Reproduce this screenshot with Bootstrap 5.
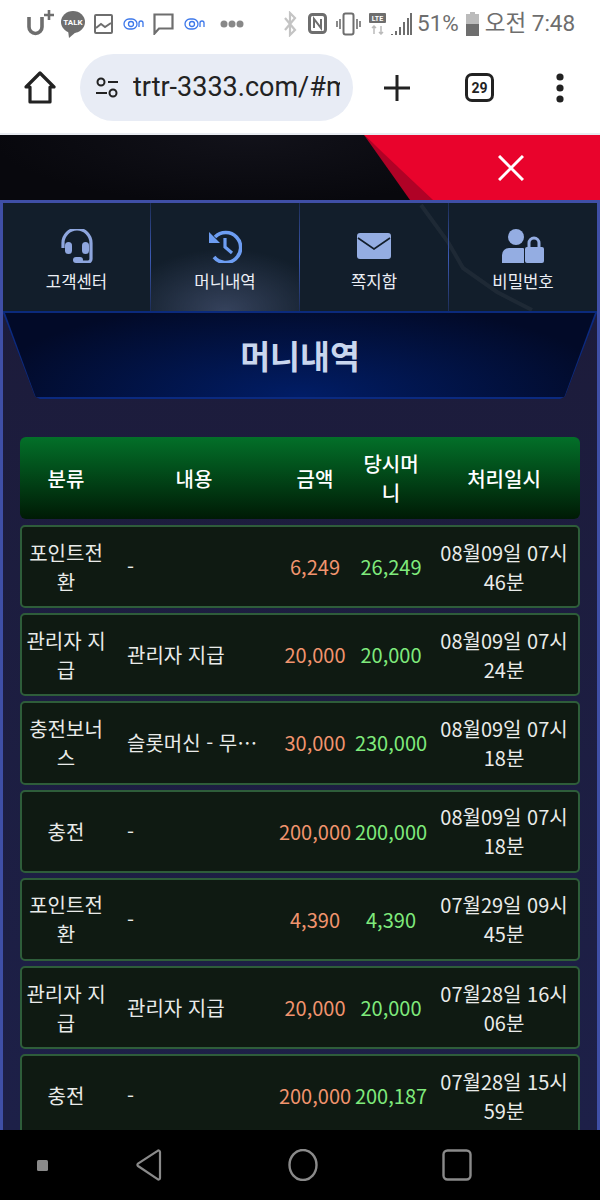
<!DOCTYPE html>
<html lang="ko">
<head>
  <meta charset="UTF-8" />
  <title>머니내역</title>
  <link href="https://cdn.jsdelivr.net/npm/bootstrap@5.3.0/dist/css/bootstrap.min.css" rel="stylesheet">
  <style>
    html, body { margin: 0; background: #000; }
    body { font-family: "Noto Sans CJK KR", "Noto Sans", sans-serif; }
    .phone { width: 600px; height: 1200px; overflow: hidden; }
    /* status bar + browser toolbar */
    .status-bar { height: 42px; background: #fff; color: #6e6e6e; padding: 5px 0 0 27px; }
    .status-bar svg { display: block; flex: none; }
    .status-text { font-family: "Roboto", "Noto Sans CJK KR", sans-serif; font-size: 22.5px; white-space: nowrap; }
    .tool-bar { height: 91px; background: #fff; padding: 0 28px 0 24px; }
    .url-pill { width: 273px; height: 67px; margin-left: 24px; background: #e8ecf5; border-radius: 34px; padding-left: 15px; overflow: hidden; flex: none; }
    .url-text { font-family: "Roboto", sans-serif; font-size: 27px; color: #222; width: 207px; margin-left: 14px; overflow: hidden; white-space: nowrap; }
    .tab-count { width: 29px; height: 29px; border: 3px solid #222; border-radius: 7px; font: 700 14px "Roboto", sans-serif; color: #222; flex: none; }
    .tool-line { height: 2px; background: #e8ebf1; }
    /* page */
    .page-area { height: 995px; overflow: hidden; background: #0a0a10; }
    .banner { height: 65px; position: relative; background: radial-gradient(ellipse 260px 70px at 250px 0, #12121a, #08080d); }
    .banner-dark { position: absolute; inset: 0; background: #b00226; clip-path: polygon(364px 0, 436px 65px, 410px 65px); }
    .banner-red { position: absolute; inset: 0; background: #e9032c; clip-path: polygon(364px 0, 600px 0, 600px 65px, 433px 65px); }
    .banner-close { position: absolute; right: 76px; top: 20px; }
    .panel { height: 930px; border: solid #3f4fa6; border-width: 3px 3px 0; background: linear-gradient(#1c1b39, #1d2048); overflow: hidden; }
    .side-tabs { height: 110px; background: #121e2b; border-bottom: 2px solid #0b2a7c; position: relative; }
    .side-bolt { position: absolute; left: 410px; top: 0; }
    .side-tab { flex: 0 0 149px; color: #eceff5; font-size: 16.700px; padding-top: 26px; line-height: 24px; border-left: 1px solid; border-image: linear-gradient(#1c2c54, #3c5ab4 50%, #1c2c54) 1; position: relative; }
    .side-tab:first-of-type { border-left: 0; flex-basis: 147px; }
    .side-tab.on { background: radial-gradient(ellipse 105px 62px at 50% 100%, #35425c, #121e2b00); }
    .side-tab svg { display: block; height: 34px; margin-bottom: 6px; }
    .title-edge { height: 86px; background: #0b2a80; clip-path: polygon(0 0, 100% 0, 94.600% 97%, 93.800% 100%, 6.200% 100%, 5.400% 97%); padding-bottom: 2px; }
    .title-box { height: 100%; background: radial-gradient(ellipse 60% 130% at 50% 100%, #011d66, #020a28 90%); clip-path: polygon(2px 0, calc(100% - 2px) 0, 94.500% 100%, 5.500% 100%); color: #c9d6ee; font-size: 32.500px; font-weight: 700; }
    .hist-wrap { padding: 38px 17px 0; }
    .hist-head { height: 82px; border-radius: 6px; background: linear-gradient(#037029, #001a05); color: #fff; font-size: 20px; font-weight: 500; line-height: 29px; margin-bottom: 6px; padding: 0 2px; }
    .hist-row { height: 83.200px; border: 2px solid #2e5d3a; border-radius: 5px; background: #0f1a12; color: #e9ebe9; font-size: 20px; line-height: 29px; margin-bottom: 5px; }
    .col-kind { width: 88px; flex: none; padding: 0 3px; text-align: center; }
    .col-memo { width: 168px; flex: none; padding: 0 17px; min-width: 0; }
    .col-memo.head { text-align: center; padding: 0; }
    .memo-text { white-space: nowrap; }
    .col-amt { width: 74px; flex: none; text-align: center; white-space: nowrap; color: #f1946e; }
    .col-now { width: 78px; flex: none; text-align: center; white-space: nowrap; color: #7fea7c; }
    .col-now.head { white-space: normal; padding: 0 4px; color: #fff; }
    .col-amt.head { color: #fff; }
    .col-date { width: 148px; flex: none; padding: 0 5px; text-align: center; }
    .nav-bar { height: 70px; background: #000; padding-left: 37px; }
  </style>
</head>
<body>
<div class="phone d-flex flex-column">
  <div class="status-bar d-flex align-items-center">
    <svg width="58" height="30" viewBox="0 0 58 30"><path d="M2 8v10a6.500 6.500 0 0 0 13 0V8" fill="none" stroke="#6e6e6e" stroke-width="3.600"/><path d="M17 6h10M22 1v10" stroke="#6e6e6e" stroke-width="2.600"/><ellipse cx="46" cy="13" rx="12" ry="11" fill="#6e6e6e"/><path d="M41 21l1 8 7-6z" fill="#6e6e6e"/><text x="46" y="16" text-anchor="middle" font-family="Roboto, sans-serif" font-size="8" font-weight="700" fill="#fff">TALK</text></svg>
    <svg style="margin-left:9px" width="19" height="20" viewBox="0 0 19 20"><rect x="1" y="1" width="17" height="18" rx="1" fill="none" stroke="#6e6e6e" stroke-width="2"/><path d="M2 14l5-4 4 3 6-4" fill="none" stroke="#6e6e6e" stroke-width="2"/></svg>
    <svg style="margin-left:10px" width="21" height="12" viewBox="0 0 21 12"><rect x="1" y="1" width="13" height="10" rx="5" fill="none" stroke="#3d78ea" stroke-width="1.300"/><circle cx="8" cy="6" r="2.500" fill="none" stroke="#3d78ea" stroke-width="1.300"/><path d="M16 9V5a2 2 0 0 1 4 0v4" fill="none" stroke="#3d78ea" stroke-width="1.300"/></svg>
    <svg style="margin-left:9px" width="21" height="22" viewBox="0 0 21 22"><path d="M1.500 1.500h18v14H6l-4.500 5z" fill="none" stroke="#6e6e6e" stroke-width="2.200"/></svg>
    <svg style="margin-left:10px" width="21" height="12" viewBox="0 0 21 12"><rect x="1" y="1" width="13" height="10" rx="5" fill="none" stroke="#3d78ea" stroke-width="1.300"/><circle cx="8" cy="6" r="2.500" fill="none" stroke="#3d78ea" stroke-width="1.300"/><path d="M16 9V5a2 2 0 0 1 4 0v4" fill="none" stroke="#3d78ea" stroke-width="1.300"/></svg>
    <svg style="margin-left:15px" width="24" height="8" viewBox="0 0 24 8"><circle cx="4" cy="4" r="3.500" fill="#888"/><circle cx="12" cy="4" r="3.500" fill="#888"/><circle cx="20" cy="4" r="3.500" fill="#888"/></svg>
    <svg style="margin-left:39px" width="14" height="26" viewBox="0 0 14 26"><path d="M2 7l10 12-5 5V2l5 5L2 19" fill="none" stroke="#c4c4c4" stroke-width="2.200"/></svg>
    <svg style="margin-left:11px" width="19" height="21" viewBox="0 0 19 21"><rect x="1.500" y="1.500" width="16" height="18" rx="3" fill="none" stroke="#6e6e6e" stroke-width="3"/><path d="M6 15V6l7 9V6" fill="none" stroke="#6e6e6e" stroke-width="2"/></svg>
    <svg style="margin-left:9px" width="25" height="24" viewBox="0 0 25 24"><rect x="7.500" y="1.500" width="10" height="21" rx="2" fill="none" stroke="#6e6e6e" stroke-width="2"/><path d="M4 7v10M1 9v6M21 7v10M24 9v6" stroke="#6e6e6e" stroke-width="1.600"/></svg>
    <svg style="margin-left:8px" width="17" height="22" viewBox="0 0 17 22"><rect width="17" height="10" rx="1" fill="#6e6e6e"/><text x="8.500" y="7.500" text-anchor="middle" font-family="Roboto, sans-serif" font-size="7" font-weight="700" fill="#fff">LTE</text><path d="M5 13v8M3 15l2-2 2 2M12 13v8M10 19l2 2 2-2" fill="none" stroke="#bbb" stroke-width="1.500"/></svg>
    <svg style="margin-left:5px" width="21" height="24" viewBox="0 0 21 24"><path d="M1 23v-1M5 23v-4M9 23v-8M13 23V10M17 23V6M20 23V1" stroke="#6e6e6e" stroke-width="2"/></svg>
    <span class="status-text" style="margin-left:5px">51%</span>
    <svg style="margin-left:7px" width="13" height="24" viewBox="0 0 13 24"><rect x="4" width="5" height="3" fill="#bbb"/><rect y="2" width="13" height="22" fill="#bbb"/><rect y="12" width="13" height="12" fill="#6e6e6e"/></svg>
    <span class="status-text" style="margin-left:6px">오전 7:48</span>
  </div>
  <div class="tool-bar d-flex align-items-center">
    <svg width="32" height="34" viewBox="0 0 32 34"><path d="M2 16L16 2l14 14h-4v15H6V16z" fill="none" stroke="#222" stroke-width="3.200" stroke-linejoin="round"/></svg>
    <div class="url-pill d-flex align-items-center">
      <svg width="24" height="24" viewBox="0 0 24 24" style="flex:none"><circle cx="6" cy="6" r="3.500" fill="none" stroke="#222" stroke-width="2"/><path d="M13 6h10M1 17h11" stroke="#222" stroke-width="2"/><circle cx="18" cy="17" r="3.500" fill="none" stroke="#222" stroke-width="2"/></svg>
      <span class="url-text">trtr-3333.com/#m</span>
    </div>
    <svg style="margin-left:30px;flex:none" width="28" height="28" viewBox="0 0 28 28"><path d="M14 1v26M1 14h26" stroke="#222" stroke-width="3"/></svg>
    <div class="tab-count d-flex align-items-center justify-content-center" style="margin-left:54px">29</div>
    <svg style="margin-left:62px;flex:none" width="8" height="30" viewBox="0 0 8 30"><circle cx="4" cy="4" r="3.600" fill="#222"/><circle cx="4" cy="15" r="3.600" fill="#222"/><circle cx="4" cy="26" r="3.600" fill="#222"/></svg>
  </div>
  <div class="tool-line"></div>
  <div class="page-area">
    <div class="banner">
      <div class="banner-dark"></div>
      <div class="banner-red"></div>
      <svg class="banner-close" width="26" height="26" viewBox="0 0 26 26"><path d="M1 1l24 24M25 1L1 25" stroke="#fff" stroke-width="3"/></svg>
    </div>
    <div class="panel">
      <div class="side-tabs d-flex">
        <svg class="side-bolt" width="130" height="108" viewBox="0 0 130 108"><path d="M8 2l27 37 15 26 34 24 35 18" fill="none" stroke="#fff" stroke-opacity=".05" stroke-width="4"/></svg>
        <div class="side-tab d-flex flex-column align-items-center">
          <svg width="34" height="34" viewBox="0 0 34 34"><path d="M3 19v-5a14 14 0 0 1 28 0v16a3 3 0 0 1-3 3h-8" fill="none" stroke="#8ea6de" stroke-width="3.200"/><rect x="5" y="13" width="7" height="12" rx="3.500" fill="#8ea6de"/><rect x="22" y="13" width="7" height="12" rx="3.500" fill="#8ea6de"/><rect x="13" y="28" width="10" height="6" rx="3" fill="#8ea6de"/></svg>
          고객센터
        </div>
        <div class="side-tab on d-flex flex-column align-items-center">
          <svg width="34" height="34" viewBox="0 0 34 34"><path d="M7 8a15 15 0 1 1-1 20" fill="none" stroke="#6d9df2" stroke-width="3.600"/><path d="M1 3l11 11H1z" fill="#6d9df2"/><path d="M17 9v9l7 6" fill="none" stroke="#6d9df2" stroke-width="3.200"/></svg>
          머니내역
        </div>
        <div class="side-tab d-flex flex-column align-items-center">
          <svg width="34" height="34" viewBox="0 0 34 34"><rect y="4" width="34" height="26" rx="3" fill="#94ade2"/><path d="M1 9l16 11L33 9" fill="none" stroke="#121e2b" stroke-width="1.600"/></svg>
          쪽지함
        </div>
        <div class="side-tab d-flex flex-column align-items-center">
          <svg width="42" height="34" viewBox="0 0 42 34"><circle cx="14" cy="8" r="8" fill="#94ade2"/><path d="M0 34v-8a7 7 0 0 1 7-7h14a8 8 0 0 1 1 .5V34z" fill="#94ade2"/><path d="M27 18v-4a5 5 0 0 1 10 0v4" fill="none" stroke="#94ade2" stroke-width="3"/><rect x="23" y="18" width="19" height="16" rx="2" fill="#94ade2"/></svg>
          비밀번호
        </div>
      </div>
      <div class="title-edge">
        <div class="title-box d-flex align-items-center justify-content-center">머니내역</div>
      </div>
      <div class="hist-wrap">
        <div class="hist-head d-flex align-items-center">
          <div class="col-kind">분류</div>
          <div class="col-memo head">내용</div>
          <div class="col-amt head">금액</div>
          <div class="col-now head">당시머니</div>
          <div class="col-date">처리일시</div>
        </div>
        <div class="hist-row d-flex align-items-center">
          <div class="col-kind">포인트전환</div><div class="col-memo"><div class="memo-text">-</div></div><div class="col-amt">6,249</div><div class="col-now">26,249</div><div class="col-date">08월09일 07시 46분</div>
        </div>
        <div class="hist-row d-flex align-items-center">
          <div class="col-kind">관리자 지급</div><div class="col-memo"><div class="memo-text">관리자 지급</div></div><div class="col-amt">20,000</div><div class="col-now">20,000</div><div class="col-date">08월09일 07시 24분</div>
        </div>
        <div class="hist-row d-flex align-items-center">
          <div class="col-kind">충전보너스</div><div class="col-memo"><div class="memo-text">슬롯머신 - 무…</div></div><div class="col-amt">30,000</div><div class="col-now">230,000</div><div class="col-date">08월09일 07시 18분</div>
        </div>
        <div class="hist-row d-flex align-items-center">
          <div class="col-kind">충전</div><div class="col-memo"><div class="memo-text">-</div></div><div class="col-amt">200,000</div><div class="col-now">200,000</div><div class="col-date">08월09일 07시 18분</div>
        </div>
        <div class="hist-row d-flex align-items-center">
          <div class="col-kind">포인트전환</div><div class="col-memo"><div class="memo-text">-</div></div><div class="col-amt">4,390</div><div class="col-now">4,390</div><div class="col-date">07월29일 09시 45분</div>
        </div>
        <div class="hist-row d-flex align-items-center">
          <div class="col-kind">관리자 지급</div><div class="col-memo"><div class="memo-text">관리자 지급</div></div><div class="col-amt">20,000</div><div class="col-now">20,000</div><div class="col-date">07월28일 16시 06분</div>
        </div>
        <div class="hist-row d-flex align-items-center">
          <div class="col-kind">충전</div><div class="col-memo"><div class="memo-text">-</div></div><div class="col-amt">200,000</div><div class="col-now">200,187</div><div class="col-date">07월28일 15시 59분</div>
        </div>
      </div>
    </div>
  </div>
  <div class="nav-bar d-flex align-items-center">
    <svg width="11" height="11" viewBox="0 0 11 11"><rect width="11" height="11" rx="1.500" fill="#8a8a8a"/></svg>
    <svg style="margin-left:88px" width="26" height="32" viewBox="0 0 26 32"><path d="M24 3v26a1.500 1.500 0 0 1-2.400 1.200L2 17a1.500 1.500 0 0 1 0-2.400L21.600 1.800A1.500 1.500 0 0 1 24 3z" fill="none" stroke="#8a8a8a" stroke-width="2.200"/></svg>
    <svg style="margin-left:126px" width="30" height="32" viewBox="0 0 30 32"><ellipse cx="15" cy="16" rx="13.500" ry="15" fill="none" stroke="#8a8a8a" stroke-width="2.400"/></svg>
    <svg style="margin-left:124px" width="30" height="32" viewBox="0 0 30 32"><rect x="1.500" y="1.500" width="27" height="29" rx="4" fill="none" stroke="#8a8a8a" stroke-width="2.400"/></svg>
  </div>
</div>
<script src="https://cdn.jsdelivr.net/npm/bootstrap@5.3.0/dist/js/bootstrap.bundle.min.js"></script>
</body>
</html>
